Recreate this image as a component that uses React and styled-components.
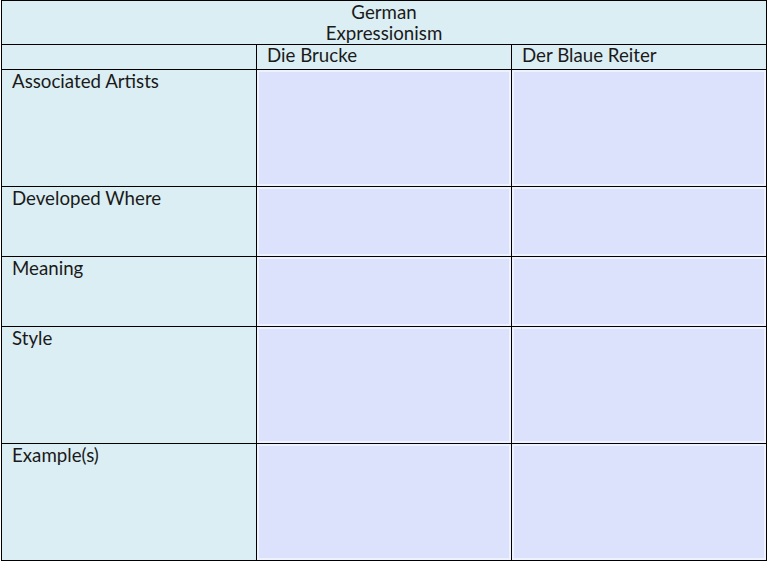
import styled, { createGlobalStyle } from "styled-components"

const GlobalStyle = createGlobalStyle`
    body {
        margin: 0;
        background: #FFFFFF;
        font-family: Lato, "Liberation Sans", sans-serif;
    }
`

const rows = [
    { label: "Associated Artists", height: 116 },
    { label: "Developed Where", height: 69 },
    { label: "Meaning", height: 69 },
    { label: "Style", height: 116 },
    { label: "Example(s)", height: 116 },
]

export default function App() {
    return (
        <>
            <GlobalStyle />
            <Tabela>
                <Titulo>
                    <span>German</span>
                    <span>Expressionism</span>
                </Titulo>
                <Cabecalho />
                <Cabecalho>Die Brucke</Cabecalho>
                <Cabecalho>Der Blaue Reiter</Cabecalho>
                {rows.map((r) => (
                    <Linha key={r.label} $h={r.height}>
                        <Rotulo>{r.label}</Rotulo>
                        <Vazio />
                        <Vazio />
                    </Linha>
                ))}
            </Tabela>
        </>
    )
}

const Tabela = styled.div`
    width: 764px;
    margin-left: 1px;
    display: grid;
    grid-template-columns: 254px 254px 254px;
    gap: 1px;
    background: #000000;
    border: 1px solid #000000;
    color: #1a1a1a;
    font-size: 18.7px;
    line-height: 22px;
`
const Titulo = styled.div`
    grid-column: 1 / 4;
    height: 43px;
    background: #DBEEF3;
    display: flex;
    flex-direction: column;
    align-items: center;
    line-height: 21px;
    padding-top: 1px;
    box-sizing: border-box;
`
const Cabecalho = styled.div`
    height: 24px;
    background: #DBEEF3;
    padding: 0 10px;
    line-height: 20px;
    box-sizing: border-box;
`
const Linha = styled.div`
    display: contents;
    & > div {
        height: ${(p) => p.$h}px;
    }
`
const Rotulo = styled.div`
    background: #DBEEF3;
    padding: 0 10px;
    box-sizing: border-box;
`
const Vazio = styled.div`
    background: #DCE2FC;
    border: 2px solid #EEF1FE;
    box-sizing: border-box;
`
